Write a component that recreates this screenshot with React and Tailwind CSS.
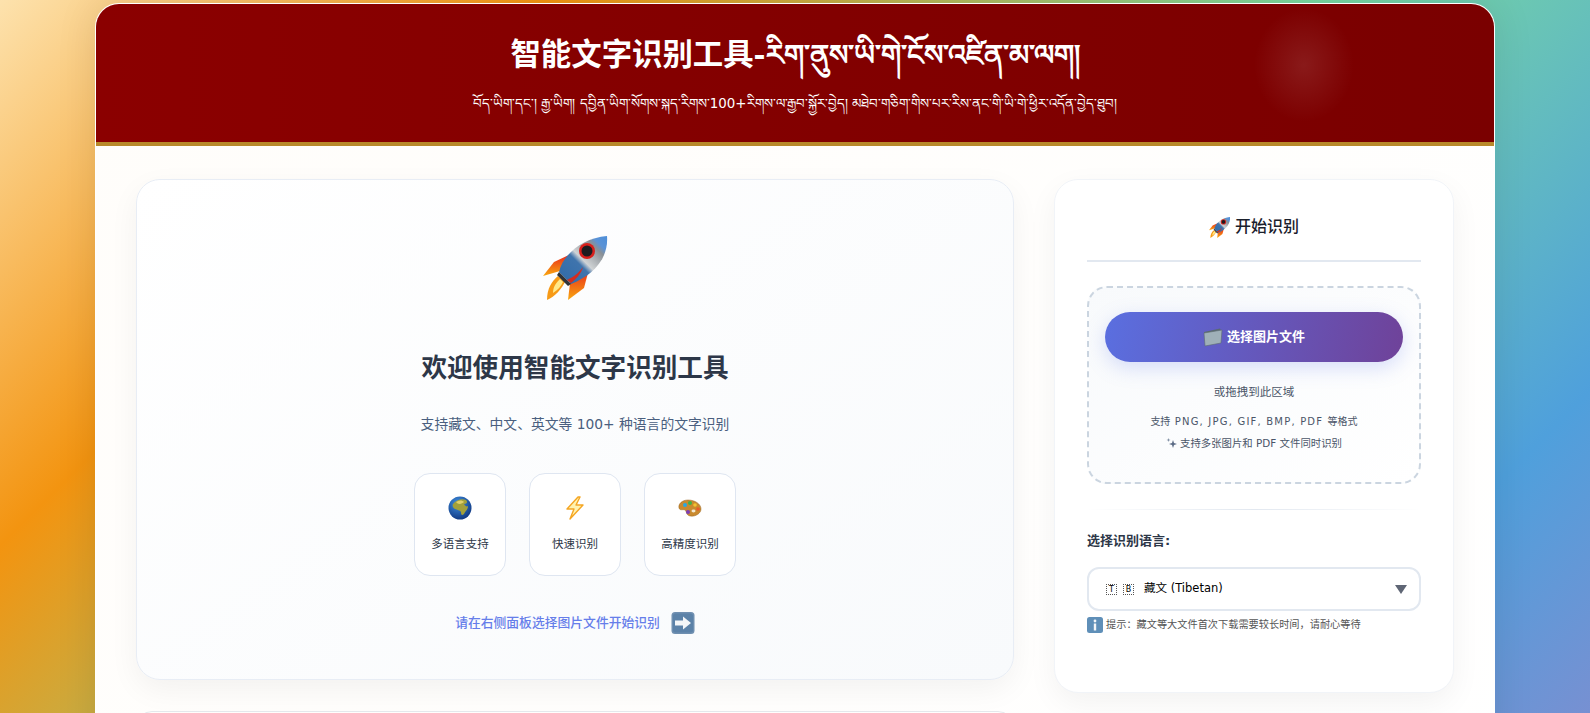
import React from "react";

const FONT = "font-['DejaVu_Sans','Noto_Sans_CJK_SC',sans-serif]";

function Rocket({ className, id }) {
  return (
    <svg viewBox="0 0 64 64" className={className}>
      <defs>
        <linearGradient id={`${id}b`} x1="0" y1="1" x2="1" y2="0">
          <stop offset="0" stopColor="#2f6aa8" />
          <stop offset="0.42" stopColor="#3f74ad" />
          <stop offset="0.5" stopColor="#d0d3d5" />
          <stop offset="0.76" stopColor="#8a9096" />
          <stop offset="0.84" stopColor="#5b93d6" />
          <stop offset="1" stopColor="#4d8ed8" />
        </linearGradient>
        <linearGradient id={`${id}f`} x1="0" y1="0" x2="0" y2="1">
          <stop offset="0" stopColor="#e8241c" />
          <stop offset="1" stopColor="#f9a80f" />
        </linearGradient>
      </defs>
      <path d="M28 18 L11 26 L0 40 L17 35 Z" fill={`url(#${id}f)`} />
      <path d="M46 33 L41 52 L25 64 L27 47 Z" fill={`url(#${id}f)`} />
      <path d="M4 64 C4 52 9 45 15 40 L22 46 C19 52 12 61 4 64 Z" fill="#f79a16" />
      <path d="M10 57 C10 50 14 46 17 43 L20 46 C18 50 15 54 10 57 Z" fill="#ffe98a" />
      <path d="M16 36 C20 18 40 2 64 0 C66 24 48 40 28 48 Z" fill={`url(#${id}b)`} />
      <path d="M16 36 L28 48 L25 50 L14 39 Z" fill="#2f3338" />
      <path d="M28 47 C33 43 38 38 40 31 C35 38 30 41 24 44 Z" fill="#d52b1e" />
      <circle cx="44" cy="15" r="8" fill="#d8201c" />
      <circle cx="44" cy="15" r="5.5" fill="#1c1c20" />
    </svg>
  );
}

function Globe({ className }) {
  return (
    <svg viewBox="0 0 24 24" className={className}>
      <defs>
        <radialGradient id="gb" cx="0.4" cy="0.3" r="0.8">
          <stop offset="0" stopColor="#3f8fe0" />
          <stop offset="1" stopColor="#0b2f78" />
        </radialGradient>
      </defs>
      <circle cx="12" cy="12" r="11.5" fill="url(#gb)" />
      <path d="M5 8 C8 4 14 2 18 4 C20 6 19 8 16 8 C17 10 19 11 20 10 C20 14 17 15 16 18 C14 20 13 19 13 16 C12 14 9 14 7 13 C5 12 4 10 5 8 Z" fill="#a3a03a" />
      <path d="M8 6 C11 4 14 4 16 6 C14 8 10 9 8 6 Z" fill="#e0d06a" />
    </svg>
  );
}

function Bolt({ className }) {
  return (
    <svg viewBox="0 0 24 24" className={className}>
      <path d="M15 1 L4 13 L11 13 L7 23 L20 9 L13 9 L17 1 Z" fill="#fff3b0" stroke="#f5a623" strokeWidth="1.4" strokeLinejoin="round" />
    </svg>
  );
}

function Palette({ className }) {
  return (
    <svg viewBox="0 0 24 24" className={className}>
      <path d="M10 4 C4 4 0 8 1 12 C2 15 5 13 7 14 C9 16 8 19 12 20 C18 21 23 17 23 13 C23 8 17 4 10 4 Z" fill="#c98a2e" stroke="#9a6420" strokeWidth="0.5" />
      <circle cx="7" cy="9" r="2" fill="#2aa7e0" />
      <circle cx="12" cy="7" r="2" fill="#3fb24a" />
      <circle cx="17" cy="9" r="1.8" fill="#f2c230" />
      <circle cx="20" cy="13" r="1.8" fill="#ea5a2a" />
      <circle cx="10" cy="16" r="2" fill="#7b3fb5" />
      <ellipse cx="15.5" cy="15" rx="2" ry="1.4" fill="#f3e8d0" />
    </svg>
  );
}

function ArrowBox({ className }) {
  return (
    <svg viewBox="0 0 24 24" className={className}>
      <rect x="0.5" y="1" width="23" height="22" rx="3.5" fill="#6f8fb0" />
      <rect x="2" y="2.5" width="20" height="19" rx="2.5" fill="#5c82a8" />
      <path d="M4 9.5 H12 V5.5 L20 12 L12 18.5 V14.5 H4 Z" fill="#f4f6f8" />
    </svg>
  );
}

function Folder({ className }) {
  return (
    <svg viewBox="0 0 20 20" className={className}>
      <path d="M1 5 L17 1.5 L18 4 L1 7 Z" fill="#5a6a72" />
      <path d="M1 6 L19 3 L18 16 L2 19 Z" fill="#9fb0b8" stroke="#5c6a70" strokeWidth="0.6" />
    </svg>
  );
}

function InfoBox({ className }) {
  return (
    <svg viewBox="0 0 16 16" className={className}>
      <rect width="16" height="16" rx="2.5" fill="#5f8fb8" />
      <circle cx="8" cy="4" r="1.4" fill="#f4f6f8" />
      <rect x="6.8" y="6.5" width="2.4" height="7" fill="#f4f6f8" />
    </svg>
  );
}

function Sparkle({ className }) {
  return (
    <svg viewBox="0 0 12 12" className={className}>
      <path d="M7 3 L8 6 L11 7 L8 8 L7 11 L6 8 L3 7 L6 6 Z" fill="#5b6b85" />
      <path d="M2.5 1 L3 2.5 L4.5 3 L3 3.5 L2.5 5 L2 3.5 L0.5 3 L2 2.5 Z" fill="#7a8aa0" />
    </svg>
  );
}

function Feature({ icon, label }) {
  return (
    <div className="w-[91.5px] h-[103px] rounded-2xl border border-[#dfe6f1] bg-white flex flex-col items-center pt-[22px]">
      {icon}
      <div className="mt-[15px] text-[11.5px] leading-[18px] text-[#2d3748]">{label}</div>
    </div>
  );
}

export default function App() {
  return (
    <div className={`h-screen overflow-hidden bg-[linear-gradient(135deg,#fde2ad_0%,#f39410_23.7%,#78d9a0_57%,#4fa0dc_86%,#7790d2_100%)] ${FONT}`}>
      <div className="w-[1400px] mx-auto pt-[3px]">
        <div className="rounded-t-[24px] border border-white/90 border-b-0 bg-[linear-gradient(135deg,#fffdfa,#ffffff)] shadow-[0_0_40px_rgba(0,0,0,0.1)] overflow-hidden">
          <header className="relative h-[142px] bg-[linear-gradient(90deg,#8b0000,#7a0000)] border-b-4 border-[#b8892a] text-white text-center pt-[29px]">
            <div className="absolute left-[1158px] top-[4px] w-[100px] h-[114px] rounded-full bg-[radial-gradient(closest-side,rgba(255,255,255,0.1),rgba(255,255,255,0))]" />
            <h1 className="relative text-[30.4px] leading-[44px] font-bold whitespace-nowrap">智能文字识别工具<span className="text-[28.8px]">-རིག་ནུས་ཡི་གེ་ངོས་འཛིན་མ་ལག།</span></h1>
            <p className="relative mt-[15px] text-[13.4px] leading-[24px] whitespace-nowrap">བོད་ཡིག་དང་། རྒྱ་ཡིག། དབྱིན་ཡིག་སོགས་སྐད་རིགས་100+རིགས་ལ་རྒྱབ་སྐྱོར་བྱེད། མཐེབ་གཅིག་གིས་པར་རིས་ནང་གི་ཡི་གེ་ཕྱིར་འདོན་བྱེད་ཐུབ།</p>
          </header>

          <main className="flex items-start gap-[40px] px-[40px] pt-[33px]">
            <div className="w-[878px] shrink-0">
              <section className="h-[501px] rounded-[24px] border border-[#e8edf5] bg-[linear-gradient(145deg,#ffffff,#f8fafc)] shadow-[0_10px_30px_rgba(0,0,0,0.05)] flex flex-col items-center pt-[56px]">
                <Rocket id="r1" className="w-[66px] h-[64px]" />
                <h2 className="mt-[49px] text-[25.6px] leading-[38px] font-bold text-[#2d3748]">欢迎使用智能文字识别工具</h2>
                <p className="mt-[25px] text-[13.8px] leading-[24px] text-[#4a5f7f]">支持藏文、中文、英文等 100+ 种语言的文字识别</p>
                <div className="mt-[37px] flex gap-[23.5px]">
                  <Feature icon={<Globe className="w-[24px] h-[24px]" />} label="多语言支持" />
                  <Feature icon={<Bolt className="w-[24px] h-[24px]" />} label="快速识别" />
                  <Feature icon={<Palette className="w-[24px] h-[24px]" />} label="高精度识别" />
                </div>
                <div className="mt-[35px] flex items-center gap-[11px] text-[12.8px] font-medium text-[#667eea]">
                  <span>请在右侧面板选择图片文件开始识别</span>
                  <ArrowBox className="w-[24px] h-[24px]" />
                </div>
              </section>
              <div className="mt-[31px] h-[200px] rounded-[16px] border border-[#e4e8ec]" />
            </div>

            <aside className="w-[400px] h-[514px] rounded-[24px] bg-white shadow-[0_10px_30px_rgba(0,0,0,0.05)] border border-[#f1f4f8] px-[32px]">
              <div className="h-[82px] pt-[14px] border-b-2 border-[#e2e8f0] flex items-center justify-center gap-[5px] text-[16px] font-medium text-[#1a202c]">
                <Rocket id="r2" className="w-[21px] h-[21px]" />
                <span>开始识别</span>
              </div>
              <div className="mt-[24px] h-[198px] rounded-[20px] border-2 border-dashed border-[#cbd5e0] bg-[linear-gradient(145deg,#f8fafc,#ffffff)] px-[16px] pt-[24px] flex flex-col items-center">
                <button className="w-full h-[50px] rounded-full bg-[linear-gradient(100deg,#5a6fe0,#6f4299)] shadow-[0_6px_20px_rgba(102,126,234,0.25)] text-white text-[13px] font-bold flex items-center justify-center gap-[4px]">
                  <Folder className="w-[20px] h-[20px]" />
                  <span>选择图片文件</span>
                </button>
                <div className="mt-[21px] text-[11.5px] leading-[18px] text-[#4a5568]">或拖拽到此区域</div>
                <div className="mt-[13px] text-[10px] leading-[16px] text-[#4a5568]">
                  支持<span className="tracking-[1.2px]"> PNG, JPG, GIF, BMP, PDF </span>等格式
                </div>
                <div className="mt-[5px] text-[10.4px] leading-[16px] text-[#4a5568] flex items-center gap-[2px]">
                  <Sparkle className="w-[12px] h-[12px]" />
                  <span>支持多张图片和 PDF 文件同时识别</span>
                </div>
              </div>
              <div className="mt-[25px] h-px bg-[linear-gradient(90deg,transparent,#e2e8f0,transparent)]" />
              <label className="block mt-[21px] text-[13px] leading-[20px] font-bold text-[#2d3748]">选择识别语言:</label>
              <div className="mt-[16px] h-[44px] rounded-[12px] border-2 border-[#e2e8f0] flex items-center pl-[17px] pr-[12px] text-[11.5px] text-black">
                <span className="w-[11px] h-[11px] border border-dotted border-[#555] text-[8px] leading-[9px] text-center">T</span>
                <span className="ml-[6px] w-[11px] h-[11px] border border-dotted border-[#555] text-[8px] leading-[9px] text-center">B</span>
                <span className="ml-[10px]">藏文 (Tibetan)</span>
                <svg viewBox="0 0 12 9" className="w-[12px] h-[9px] ml-auto"><path d="M0 0 H12 L6 9 Z" fill="#5f6675" /></svg>
              </div>
              <div className="mt-[6px] flex items-center gap-[3px] text-[10.2px] leading-[16px] text-[#555]">
                <InfoBox className="w-[16px] h-[16px]" />
                <span>提示{"\uFF1A"}藏文等大文件首次下载需要较长时间{"\uFF0C"}请耐心等待</span>
              </div>
            </aside>
          </main>
        </div>
      </div>
    </div>
  );
}
